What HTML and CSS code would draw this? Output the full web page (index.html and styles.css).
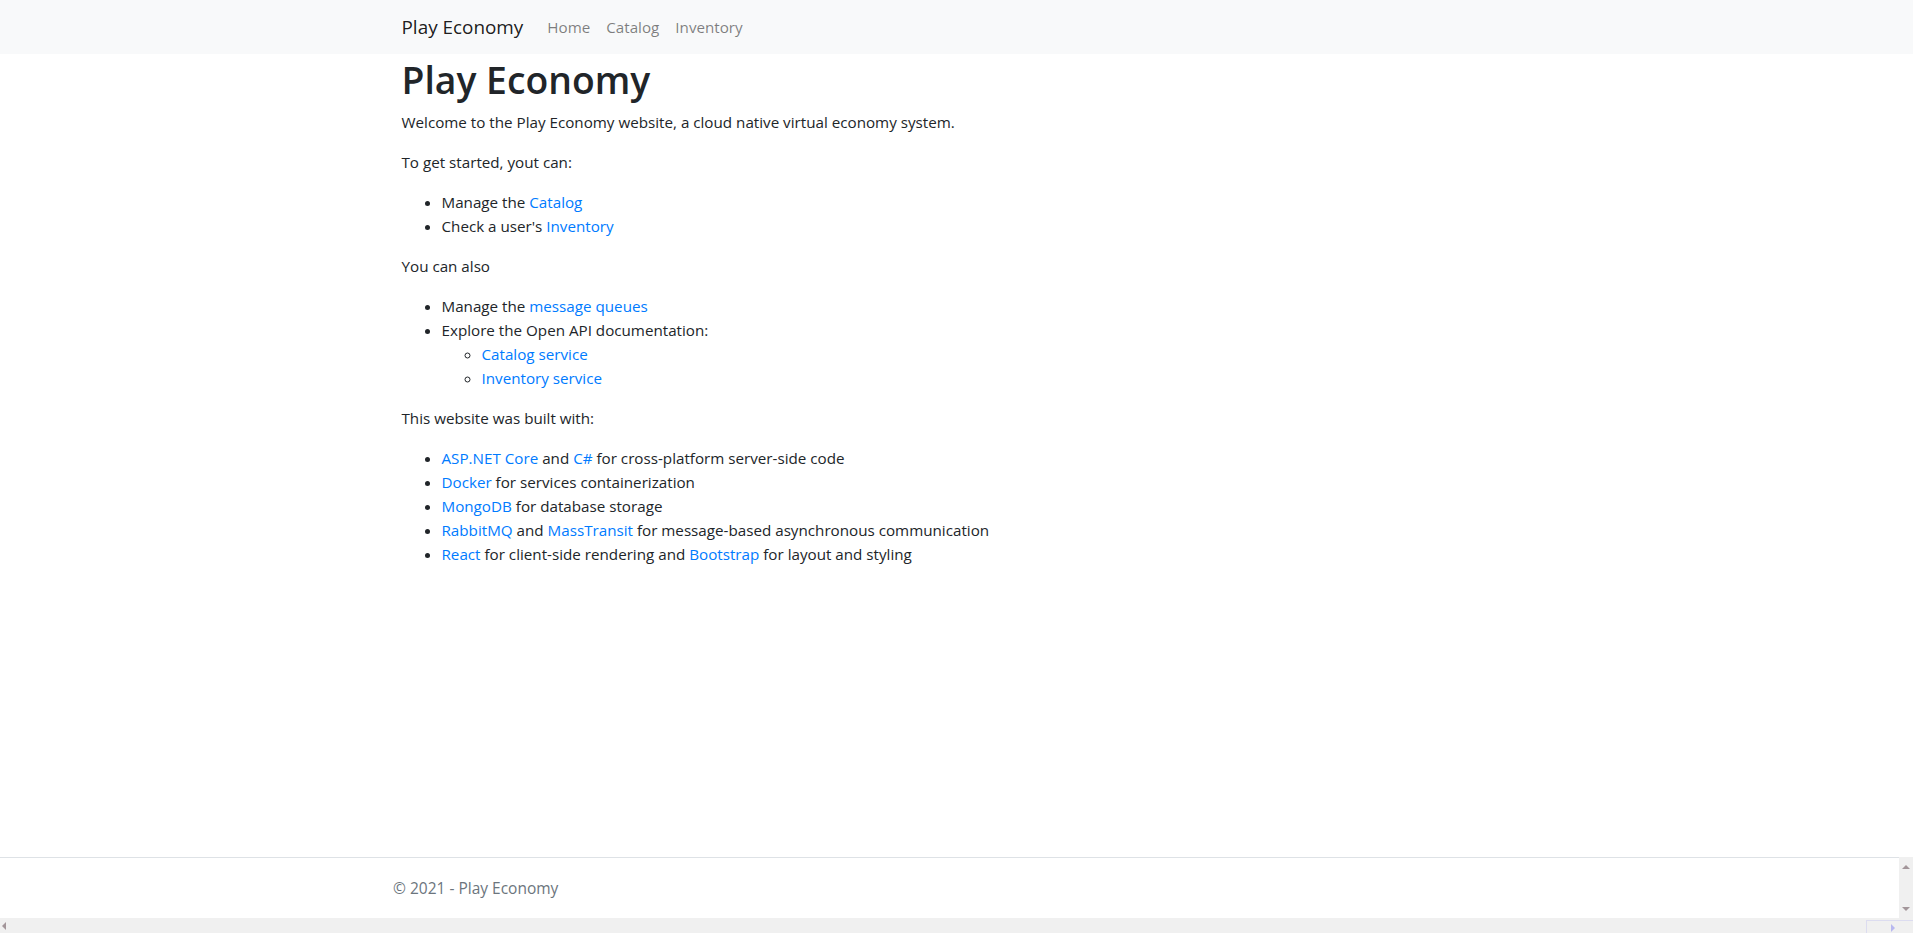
FILE: index.html
```html
<!DOCTYPE html>
<html lang="en">
<head>
<meta charset="utf-8">
<title>Play Economy</title>
<link rel="stylesheet" href="styles.css">
</head>
<body>
<div class="page">
  <header class="navbar">
    <div class="container nav-inner">
      <a class="brand" href="#">Play Economy</a>
      <nav class="nav-links">
        <a class="nav-link" href="#">Home</a>
        <a class="nav-link" href="#">Catalog</a>
        <a class="nav-link" href="#">Inventory</a>
      </nav>
    </div>
  </header>
  <main class="main">
    <div class="container">
      <h1>Play Economy</h1>
      <p>Welcome to the Play Economy website, a cloud native virtual economy system.</p>
      <p>To get started, yout can:</p>
      <ul>
        <li>Manage the <a href="#">Catalog</a></li>
        <li>Check a user's <a href="#">Inventory</a></li>
      </ul>
      <p>You can also</p>
      <ul>
        <li>Manage the <a href="#">message queues</a></li>
        <li>Explore the Open API documentation:
          <ul class="sub">
            <li><a href="#">Catalog service</a></li>
            <li><a href="#">Inventory service</a></li>
          </ul>
        </li>
      </ul>
      <p>This website was built with:</p>
      <ul>
        <li><a href="#">ASP.NET Core</a> and <a href="#">C#</a> for cross-platform server-side code</li>
        <li><a href="#">Docker</a> for services containerization</li>
        <li><a href="#">MongoDB</a> for database storage</li>
        <li><a href="#">RabbitMQ</a> and <a href="#">MassTransit</a> for message-based asynchronous communication</li>
        <li><a href="#">React</a> for client-side rendering and <a href="#">Bootstrap</a> for layout and styling</li>
      </ul>
    </div>
  </main>
  <div class="footer-row">
    <footer class="footer">
      <div class="footer-inner">&copy; 2021 - Play Economy</div>
    </footer>
    <div class="vscroll">
      <span class="arrow-up"></span>
      <span class="arrow-down"></span>
    </div>
  </div>
  <div class="hscroll">
    <span class="arrow-left"></span>
    <div class="corner">
      <span class="arrow-right"></span>
    </div>
  </div>
</div>
</body>
</html>
```
FILE: styles.css
```css
html, body {
  margin: 0;
  padding: 0;
}
body {
  font-family: "Open Sans", "Noto Sans", sans-serif;
  font-size: 15.2px;
  line-height: 24px;
  color: #212529;
  background: #fff;
  overflow: hidden;
}
a {
  color: #007bff;
  text-decoration: none;
}
.page {
  display: flex;
  flex-direction: column;
  height: 933px;
}
.container {
  width: 1110px;
  margin: 0 auto;
  padding: 0 15px;
  box-sizing: content-box;
}
.navbar {
  height: 54px;
  background: #f8f9fa;
  display: flex;
  align-items: center;
  flex-shrink: 0;
}
.nav-inner {
  display: flex;
  align-items: center;
  margin-top: -1px;
}
.brand {
  font-size: 18.9px;
  color: rgba(0, 0, 0, 0.9);
  margin-right: 16px;
  line-height: 30px;
}
.nav-links {
  display: flex;
}
.nav-link {
  color: rgba(0, 0, 0, 0.5);
  padding: 0 8px;
  line-height: 24px;
}
.main {
  flex: 1;
}
h1 {
  font-size: 37.3px;
  font-weight: 600;
  line-height: 48px;
  margin: 2px 0 6px;
}
p {
  margin: 0 0 16px;
}
ul {
  margin: 0 0 16px;
  padding-left: 40px;
}
ul.sub {
  margin-bottom: 0;
  list-style-type: circle;
}
.footer-row {
  display: flex;
  height: 61px;
  flex-shrink: 0;
}
.footer {
  flex: 1;
  border-top: 1px solid #dee2e6;
  color: #6c757d;
  font-size: 15.5px;
  line-height: 60px;
  white-space: nowrap;
}
.footer-inner {
  padding-left: 393px;
}
.vscroll {
  width: 14px;
  background: #f0f0f0;
  display: flex;
  flex-direction: column;
  justify-content: space-between;
  align-items: center;
  padding: 8px 0 7px;
  box-sizing: border-box;
}
.arrow-up {
  width: 0;
  height: 0;
  border-left: 4px solid transparent;
  border-right: 4px solid transparent;
  border-bottom: 4px solid #a3969a;
}
.arrow-down {
  width: 0;
  height: 0;
  border-left: 4px solid transparent;
  border-right: 4px solid transparent;
  border-top: 4px solid #a3969a;
}
.hscroll {
  height: 15px;
  background: #f0f0f0;
  display: flex;
  align-items: center;
  justify-content: space-between;
  flex-shrink: 0;
}
.arrow-left {
  margin-left: 2px;
  width: 0;
  height: 0;
  border-top: 4px solid transparent;
  border-bottom: 4px solid transparent;
  border-right: 4px solid #a3969a;
}
.corner {
  width: 47px;
  height: 15px;
  margin-top: 4px;
  border-top: 1px solid #dcdcf0;
  border-left: 1px solid #dcdcf0;
  box-sizing: border-box;
  display: flex;
  align-items: center;
  padding-left: 24px;
}
.arrow-right {
  width: 0;
  height: 0;
  border-top: 4px solid transparent;
  border-bottom: 4px solid transparent;
  border-left: 4px solid #b8b8f0;
}
```
